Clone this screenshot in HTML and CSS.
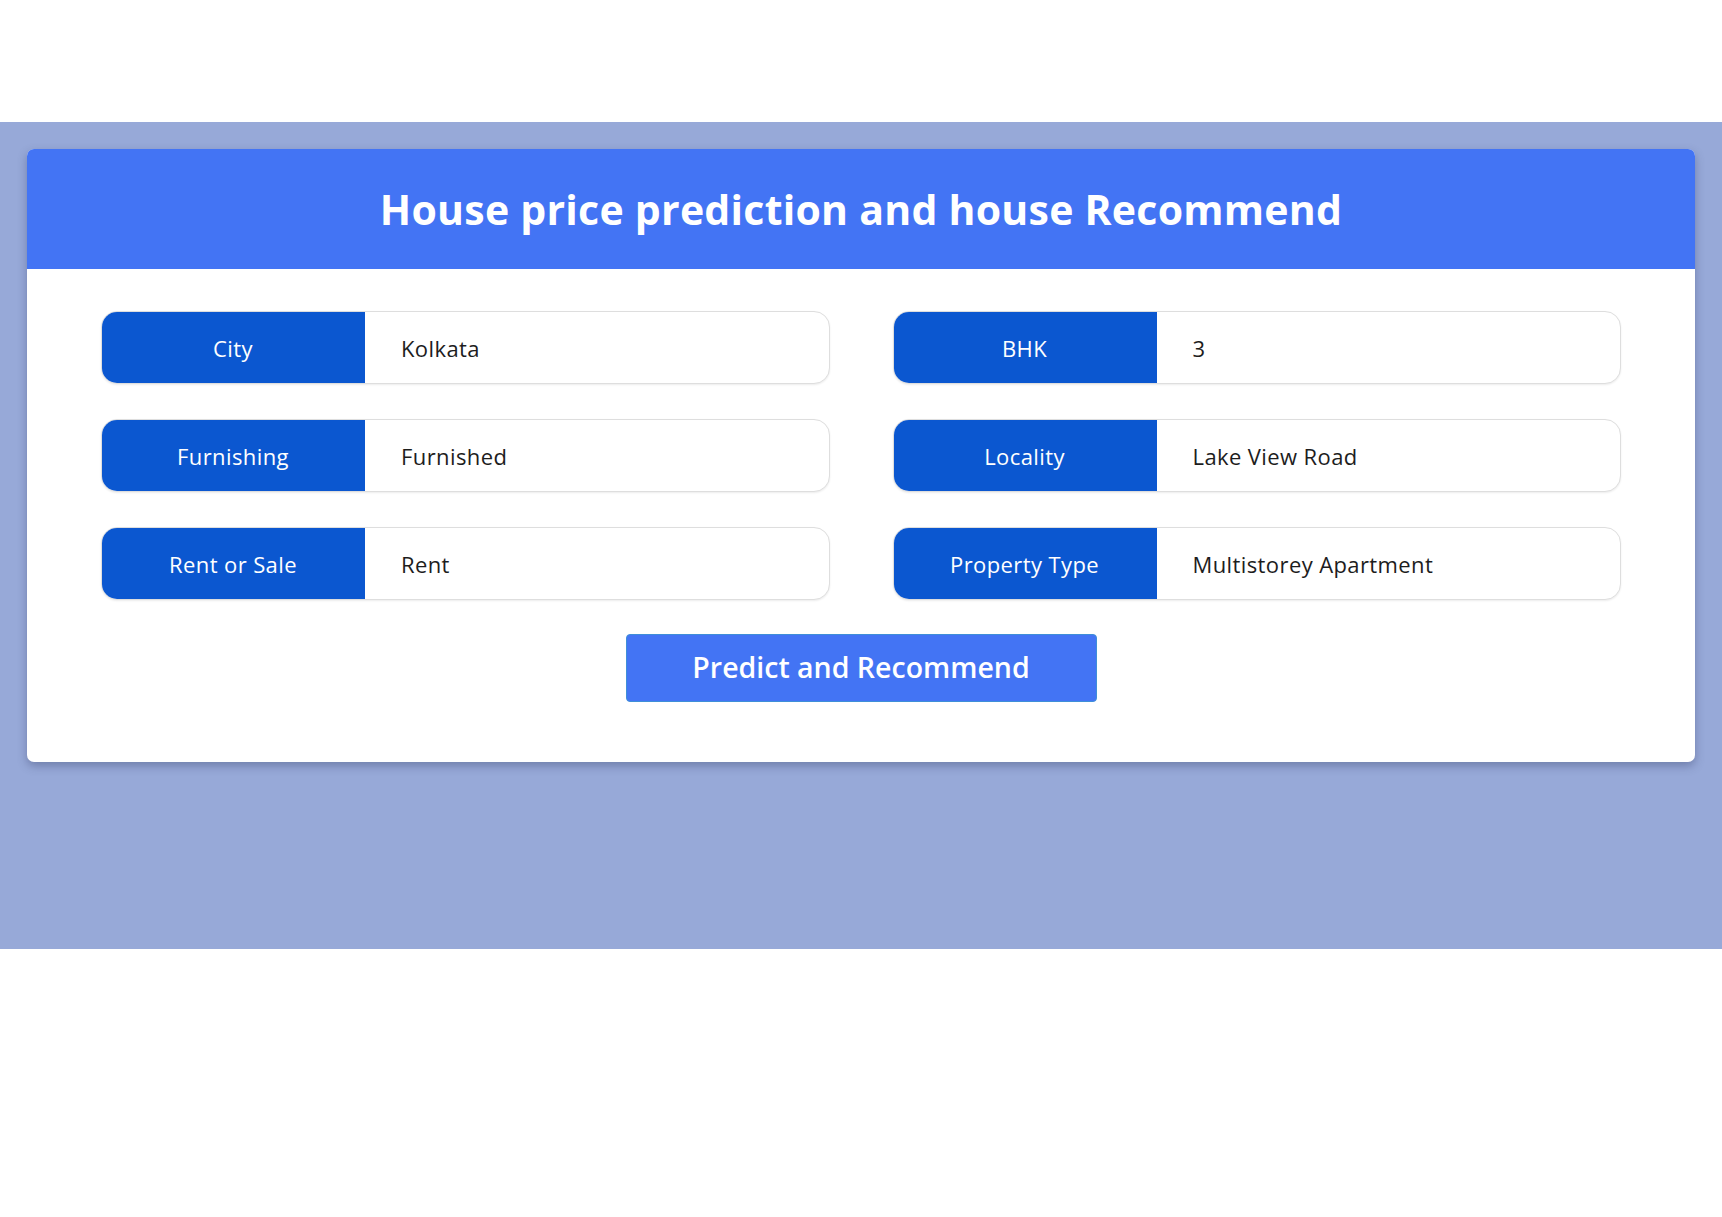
FILE: index.html
```html
<!DOCTYPE html>
<html>
<head>
<meta charset="utf-8">
<title>House price prediction</title>
<link rel="stylesheet" href="styles.css">
</head>
<body>
<div class="top-space"></div>
<main class="band">
  <section class="card">
    <header class="card-header">
      <h1 class="title">House price prediction and house Recommend</h1>
    </header>
    <form class="card-body">
      <div class="grid">
        <div class="field"><span class="label">City</span><span class="value">Kolkata</span></div>
        <div class="field"><span class="label">BHK</span><span class="value">3</span></div>
        <div class="field"><span class="label">Furnishing</span><span class="value">Furnished</span></div>
        <div class="field"><span class="label">Locality</span><span class="value">Lake View Road</span></div>
        <div class="field"><span class="label">Rent or Sale</span><span class="value">Rent</span></div>
        <div class="field"><span class="label">Property Type</span><span class="value">Multistorey Apartment</span></div>
      </div>
      <div class="actions">
        <button type="button" class="btn">Predict and Recommend</button>
      </div>
    </form>
  </section>
</main>
</body>
</html>
```
FILE: styles.css
```css
* { box-sizing: border-box; }
html, body { margin: 0; padding: 0; background: #ffffff; }
body { font-family: "Open Sans", "DejaVu Sans", sans-serif; }
.top-space { height: 122px; }
.band {
  background: #97a9d8;
  height: 827px;
  padding: 27px 27px 0 27px;
}
.card {
  background: #ffffff;
  border-radius: 7px;
  box-shadow: 0 4px 10px rgba(40, 50, 90, 0.35);
  overflow: hidden;
}
.card-header {
  background: #4374f4;
  height: 120px;
  display: flex;
  align-items: center;
  justify-content: center;
}
.title {
  margin: 0;
  color: #ffffff;
  font-size: 41px;
  font-weight: 700;
  letter-spacing: 0.25px;
}
.card-body {
  padding: 42px 74px 60px 74px;
  margin: 0;
}
.grid {
  display: grid;
  grid-template-columns: 1fr 1fr;
  column-gap: 63px;
  row-gap: 35px;
}
.field {
  display: flex;
  height: 73px;
  border-radius: 16px;
  border: 1px solid #dedede;
  box-shadow: 0 1px 2px rgba(0, 0, 0, 0.08);
  overflow: hidden;
  background: #fff;
}
.label {
  flex: 0 0 264px;
  margin: -1px 0 -1px -1px;
  background: #0b57d0;
  color: #ffffff;
  display: flex;
  align-items: center;
  justify-content: center;
  font-size: 22px;
  letter-spacing: 0.4px;
}
.value {
  display: flex;
  align-items: center;
  padding-left: 36px;
  color: #1d1d1d;
  font-size: 22px;
  letter-spacing: 0.4px;
}
.actions {
  display: flex;
  justify-content: center;
  margin-top: 34px;
}
.btn {
  width: 471px;
  height: 68px;
  border: 1px solid #3f8fd8;
  border-radius: 4px;
  background: #4374f4;
  color: #ffffff;
  font-family: inherit;
  font-size: 28.5px;
  font-weight: 600;
  padding: 0 0 2px 0;
  cursor: pointer;
}
```
